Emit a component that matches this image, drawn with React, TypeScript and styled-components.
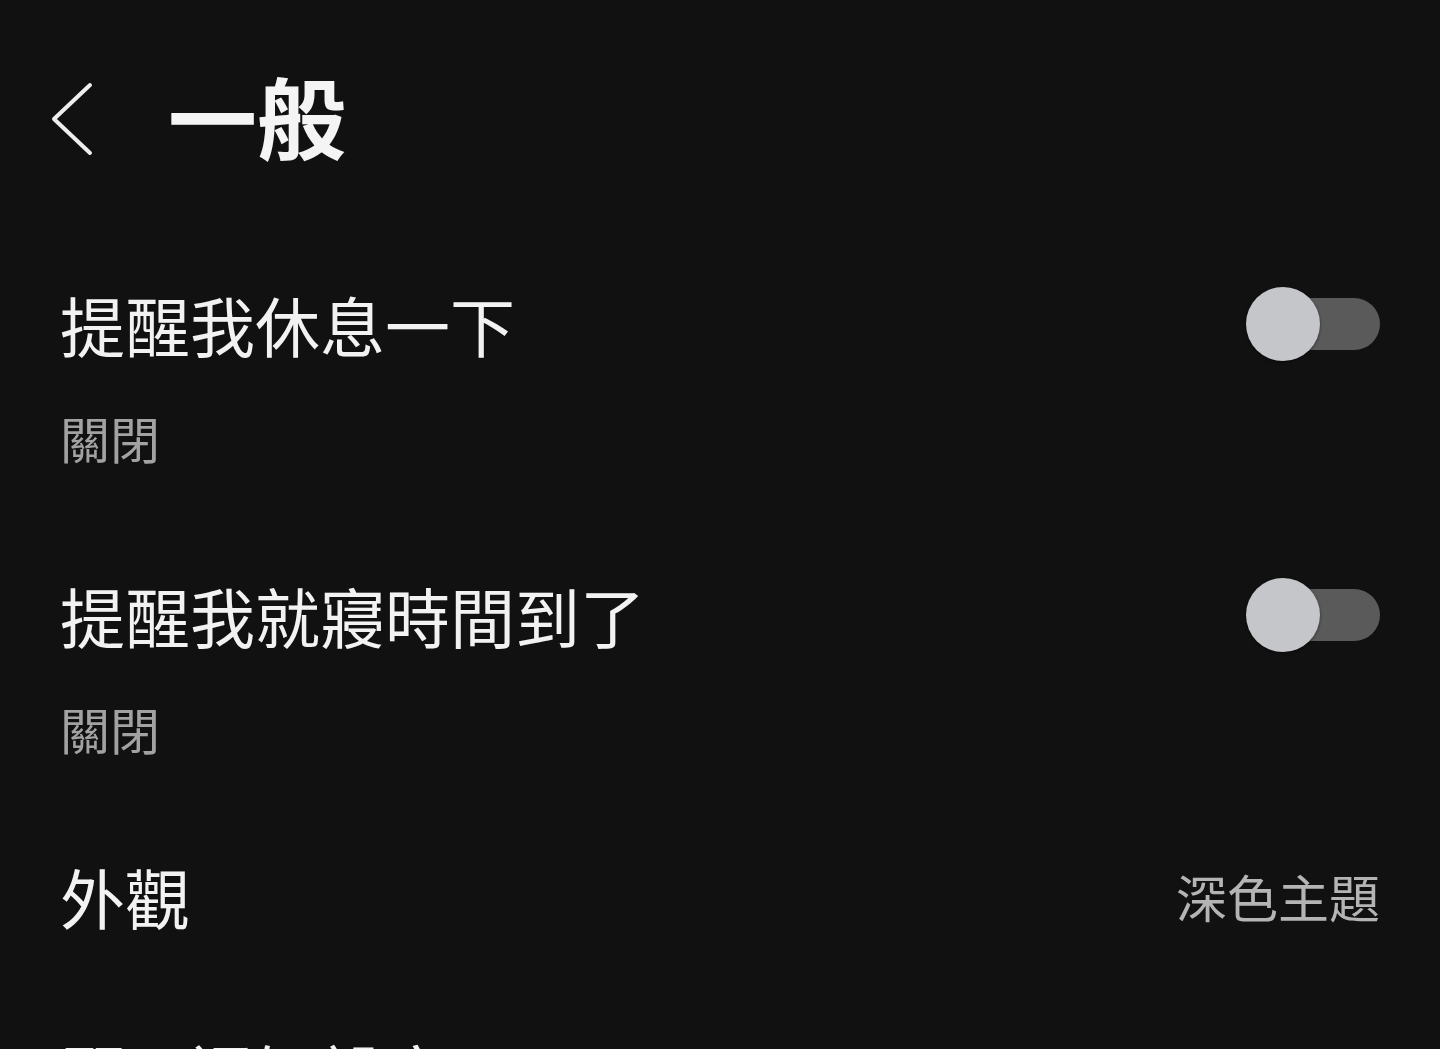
import React, { useState } from 'react';
import styled, { createGlobalStyle } from 'styled-components';

const GlobalStyle = createGlobalStyle`
    html, body {
        margin: 0;
        padding: 0;
        background: #111111;
    }
    body {
        font-family: 'Noto Sans CJK TC', 'Noto Sans', sans-serif;
        color: #f2f2f2;
        overflow: hidden;
    }
`;

interface IToggleProps {
    on: boolean;
    onToggle: () => void;
}

const Toggle: React.FC<IToggleProps> = ({ on, onToggle }) => (
    <ToggleTrack on={on} onClick={onToggle}>
        <ToggleKnob on={on} />
    </ToggleTrack>
);

interface IRowProps {
    title: string;
    sub: string;
}

const SwitchRow: React.FC<IRowProps> = ({ title, sub }) => {
    const [on, setOn] = useState<boolean>(false);
    return (
        <Row>
            <TextColumn>
                <RowTitle>{title}</RowTitle>
                <RowSub>{on ? '開啟' : sub}</RowSub>
            </TextColumn>
            <ControlSlot>
                <Toggle on={on} onToggle={() => setOn(!on)} />
            </ControlSlot>
        </Row>
    );
};

export default function App() {
    return (
        <Page>
            <GlobalStyle />
            <Header>
                <BackButton aria-label="返回">
                    <svg width="44" height="74" viewBox="0 0 44 74" fill="none">
                        <polyline
                            points="40,3 4,37 40,71"
                            stroke="#eeeeee"
                            strokeWidth="4"
                            strokeLinecap="round"
                            strokeLinejoin="round"
                        />
                    </svg>
                </BackButton>
                <Title>一般</Title>
            </Header>
            <List>
                <SwitchRow title="提醒我休息一下" sub="關閉" />
                <SwitchRow title="提醒我就寢時間到了" sub="關閉" />
                <ValueRow>
                    <RowTitle>外觀</RowTitle>
                    <RowValue>深色主題</RowValue>
                </ValueRow>
                <ValueRow last>
                    <RowTitle>顯示通知設定</RowTitle>
                </ValueRow>
            </List>
        </Page>
    );
}

const Page = styled.div`
    width: 1440px;
    height: 1049px;
    overflow: hidden;
    background: #111111;
    display: flex;
    flex-direction: column;
`;
const Header = styled.div`
    flex-shrink: 0;
    height: 230px;
    display: flex;
    align-items: center;
    padding-left: 50px;
    gap: 74px;
    box-sizing: border-box;
`;
const BackButton = styled.button`
    width: 44px;
    height: 74px;
    padding: 0;
    border: none;
    background: transparent;
    display: flex;
    cursor: pointer;
    margin-top: 8px;
`;
const Title = styled.h1`
    margin: 0;
    font-size: 89px;
    line-height: 104px;
    font-weight: 700;
    color: #f4f4f4;
    white-space: nowrap;
`;
const List = styled.div`
    flex-shrink: 0;
    display: flex;
    flex-direction: column;
    padding: 0 60px;
`;
const Row = styled.div`
    display: flex;
    justify-content: space-between;
    align-items: flex-start;
    padding: 54px 0;
`;
const TextColumn = styled.div`
    display: flex;
    flex-direction: column;
    gap: 43px;
`;
const RowTitle = styled.div`
    font-size: 65px;
    line-height: 80px;
    font-weight: 400;
    color: #f2f2f2;
    white-space: nowrap;
`;
const RowSub = styled.div`
    font-size: 50px;
    line-height: 60px;
    color: #a2a2a2;
`;
const ControlSlot = styled.div`
    height: 80px;
    display: flex;
    align-items: center;
`;
const ToggleTrack = styled.div<{ on: boolean }>`
    position: relative;
    width: 132px;
    height: 52px;
    border-radius: 26px;
    background: ${({ on }) => (on ? '#3d6fd6' : '#5a5a5a')};
    cursor: pointer;
    transition: background 0.2s;
`;
const ToggleKnob = styled.div<{ on: boolean }>`
    position: absolute;
    top: -11px;
    left: ${({ on }) => (on ? '58px' : '-2px')};
    width: 74px;
    height: 74px;
    border-radius: 50%;
    background: #c4c6ca;
    box-shadow: 0 1px 3px rgba(0, 0, 0, 0.5);
    transition: left 0.2s;
`;
const ValueRow = styled.div<{ last?: boolean }>`
    display: flex;
    justify-content: space-between;
    align-items: center;
    padding: ${({ last }) => (last ? '46px 0 50px' : '44px 0 50px')};
`;
const RowValue = styled.div`
    font-size: 51px;
    line-height: 80px;
    color: #b4b4b4;
`;
